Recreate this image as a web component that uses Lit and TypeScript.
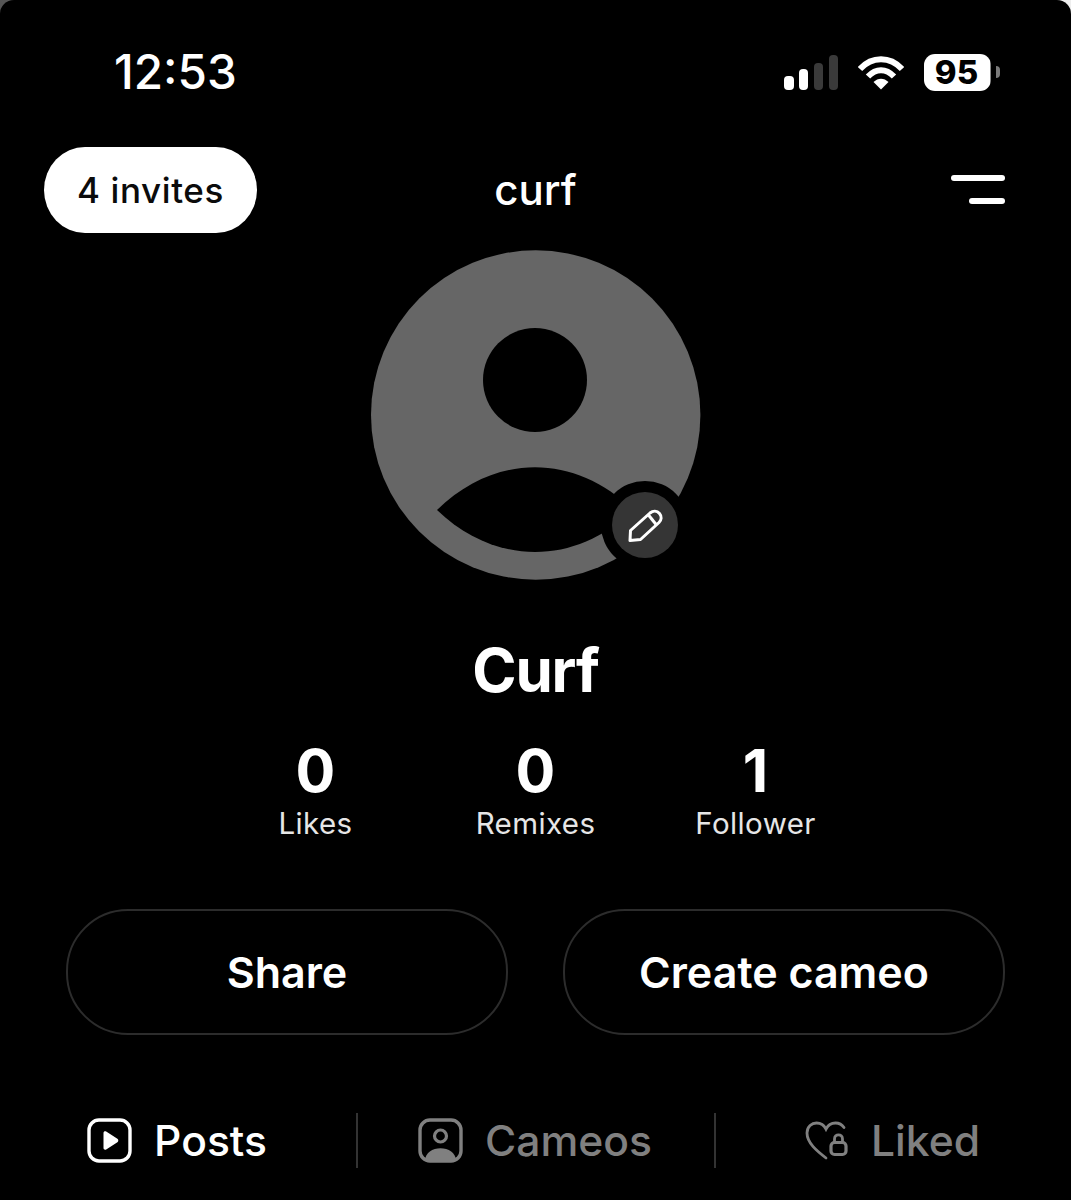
import { LitElement, html, css } from "lit";
import { customElement } from "lit/decorators.js";

@customElement("app-root")
export class AppRoot extends LitElement {
  static styles = css`
    :host { display: block; background: linear-gradient(90deg, #555, #eee); font-family: Inter, "Liberation Sans", sans-serif; }
    .screen { height: 1200px; background: #000; color: #fff; border-radius: 14px 14px 0 0; overflow: hidden; display: flex; flex-direction: column; box-sizing: border-box; }
    .status { height: 52px; margin-top: 46px; display: flex; align-items: center; padding-left: 114px; padding-right: 71px; }
    .time { font-size: 47.6px; font-weight: 500; line-height: 52px; }
    .status-right { margin-left: auto; display: flex; align-items: center; }
    .signal { display: block; }
    .wifi { display: block; margin-left: 20px; }
    .battery { margin-left: 20px; width: 67px; height: 37px; border-radius: 11px; background: linear-gradient(90deg, #fff 0 66px, #888 66px); color: #000; font-size: 33px; font-weight: 800; line-height: 37px; text-align: center; padding-right: 2px; box-sizing: border-box; }
    .nub { margin-left: 5px; width: 4px; height: 12px; background: #7a7a7a; border-radius: 0 4px 4px 0; }
    .header { margin-top: 49px; padding: 0 44px; height: 86px; display: grid; grid-template-columns: 1fr auto 1fr; align-items: center; }
    .pill { justify-self: start; width: 213px; height: 86px; border-radius: 41px / 43px; background: #fff; color: #0b0b0b; font-size: 35px; font-weight: 500; display: flex; align-items: center; justify-content: center; letter-spacing: 0.6px; }
    .handle { font-size: 42px; font-weight: 500; line-height: 86px; }
    .menu { justify-self: end; margin-right: 22px; margin-top: -2px; display: flex; flex-direction: column; align-items: flex-end; gap: 17px; }
    .menu span { display: block; height: 6px; border-radius: 3px; background: #fff; }
    .menu .a { width: 54px; }
    .menu .b { width: 36px; }
    .avatar-row { margin-top: 17px; display: flex; justify-content: center; }
    .avatar { position: relative; width: 330px; height: 330px; }
    .avatar svg { display: block; }
    .badge { position: absolute; left: 241px; top: 242px; width: 66px; height: 66px; border-radius: 50%; background: #353535; box-shadow: 0 0 0 11px #000; display: flex; align-items: center; justify-content: center; }
    .name { margin-top: 54px; text-align: center; font-size: 60px; font-weight: 700; line-height: 72px; letter-spacing: -1.2px; }
    .stats { margin-top: 32px; display: grid; grid-template-columns: repeat(3, 220px); justify-content: center; text-align: center; }
    .num { font-size: 59px; font-weight: 700; line-height: 66px; }
    .label { font-size: 29.5px; font-weight: 400; line-height: 38px; color: #e6e6e6; letter-spacing: 0.4px; }
    .actions { margin-top: 67px; padding: 0 66px; display: grid; grid-template-columns: 1fr 1fr; gap: 55px; }
    .btn { height: 126px; box-sizing: border-box; border: 2px solid #2c2c2c; border-radius: 62px; display: flex; align-items: center; justify-content: center; font-size: 43px; font-weight: 600; }
    .tabs { margin-top: 78px; display: grid; grid-template-columns: 356px 358px 357px; height: 55px; }
    .tab { display: flex; align-items: center; justify-content: center; gap: 22px; padding-right: 2px; font-size: 42.6px; font-weight: 500; color: #fff; box-sizing: border-box; }
    .tab.off { color: #808080; border-left: 2px solid #333; }
    .tab svg { display: block; flex: none; }
  `;

  render() {
    return html`
      <div class="screen">
        <div class="status">
          <div class="time">12:53</div>
          <div class="status-right">
            <svg class="signal" width="54" height="35" viewBox="0 0 54 35">
              <rect x="0" y="21" width="10" height="14" rx="4" fill="#fff" />
              <rect x="15" y="14" width="9" height="21" rx="4" fill="#fff" />
              <rect x="30" y="8" width="9" height="27" rx="4" fill="#3a3a3a" />
              <rect x="45" y="0" width="9" height="35" rx="4" fill="#3a3a3a" />
            </svg>
            <svg class="wifi" width="46" height="35" viewBox="0 0 46 35" fill="none" stroke="#fff" stroke-width="6">
              <path d="M2 14 C14 1 32 1 44 14" />
              <path d="M10 21.5 C18 13 28 13 36 21.5" />
              <path d="M15.5 27 L23 34.5 L30.5 27 C26 22.5 20 22.5 15.5 27 Z" fill="#fff" stroke="none" />
            </svg>
            <div class="battery">95</div>
            <div class="nub"></div>
          </div>
        </div>
        <div class="header">
          <div class="pill">4 invites</div>
          <div class="handle">curf</div>
          <div class="menu"><span class="a"></span><span class="b"></span></div>
        </div>
        <div class="avatar-row">
          <div class="avatar">
            <svg width="330" height="330" viewBox="0 0 330 330">
              <circle cx="164.7" cy="165" r="164.7" fill="#666" />
              <circle cx="164" cy="130" r="52" fill="#000" />
              <path d="M66 260 C124 203 204 203 262 260 C204 316 124 316 66 260 Z" fill="#000" />
            </svg>
            <div class="badge">
              <svg width="36" height="36" viewBox="0 0 36 36" fill="none" stroke="#fff" stroke-width="3" stroke-linejoin="round">
                <path d="M3 33.5 L3.5 23.5 L23 6 C26 3.5 30 3.5 32.5 6.5 C35 9.5 34.5 13 32 15.5 L13.5 32.5 Z" />
                <path d="M21.5 8 L29.5 18" />
              </svg>
            </div>
          </div>
        </div>
        <div class="name">Curf</div>
        <div class="stats">
          <div><div class="num">0</div><div class="label">Likes</div></div>
          <div><div class="num">0</div><div class="label">Remixes</div></div>
          <div><div class="num">1</div><div class="label">Follower</div></div>
        </div>
        <div class="actions">
          <div class="btn">Share</div>
          <div class="btn">Create cameo</div>
        </div>
        <div class="tabs">
          <div class="tab">
            <svg width="45" height="45" viewBox="0 0 45 45" fill="none">
              <rect x="2" y="2" width="41" height="41" rx="10" stroke="#fff" stroke-width="3.4" />
              <path d="M16.5 15 C16.5 13.5 18 12.8 19.2 13.6 L30.4 20.8 C31.6 21.6 31.6 23.4 30.4 24.2 L19.2 31.4 C18 32.2 16.5 31.5 16.5 30 Z" fill="#fff" />
            </svg>
            <span>Posts</span>
          </div>
          <div class="tab off">
            <svg width="45" height="45" viewBox="0 0 45 45" fill="none">
              <rect x="2" y="2" width="41" height="41" rx="10" stroke="#808080" stroke-width="3.4" />
              <circle cx="22.5" cy="18" r="6" stroke="#808080" stroke-width="3.2" />
              <path d="M7 43 C7 26 38 26 38 43 Z" fill="#808080" />
            </svg>
            <span>Cameos</span>
          </div>
          <div class="tab off">
            <svg width="44" height="40" viewBox="0 0 44 40" fill="none">
              <path d="M21 37 C12 30 2 22 2 12 C2 5.5 7 2 11.5 2 C15.5 2 19 4 21 8 C23 4 26.5 2 30.5 2 C34 2 37 3.5 39 6.5" stroke="#808080" stroke-width="2.8" stroke-linecap="round" />
              <rect x="26" y="21.5" width="15" height="12" rx="3.5" stroke="#808080" stroke-width="3.2" />
              <path d="M29.5 21 V18 C29.5 12.5 37.5 12.5 37.5 18 V21" stroke="#808080" stroke-width="2.8" />
            </svg>
            <span>Liked</span>
          </div>
        </div>
      </div>
    `;
  }
}
